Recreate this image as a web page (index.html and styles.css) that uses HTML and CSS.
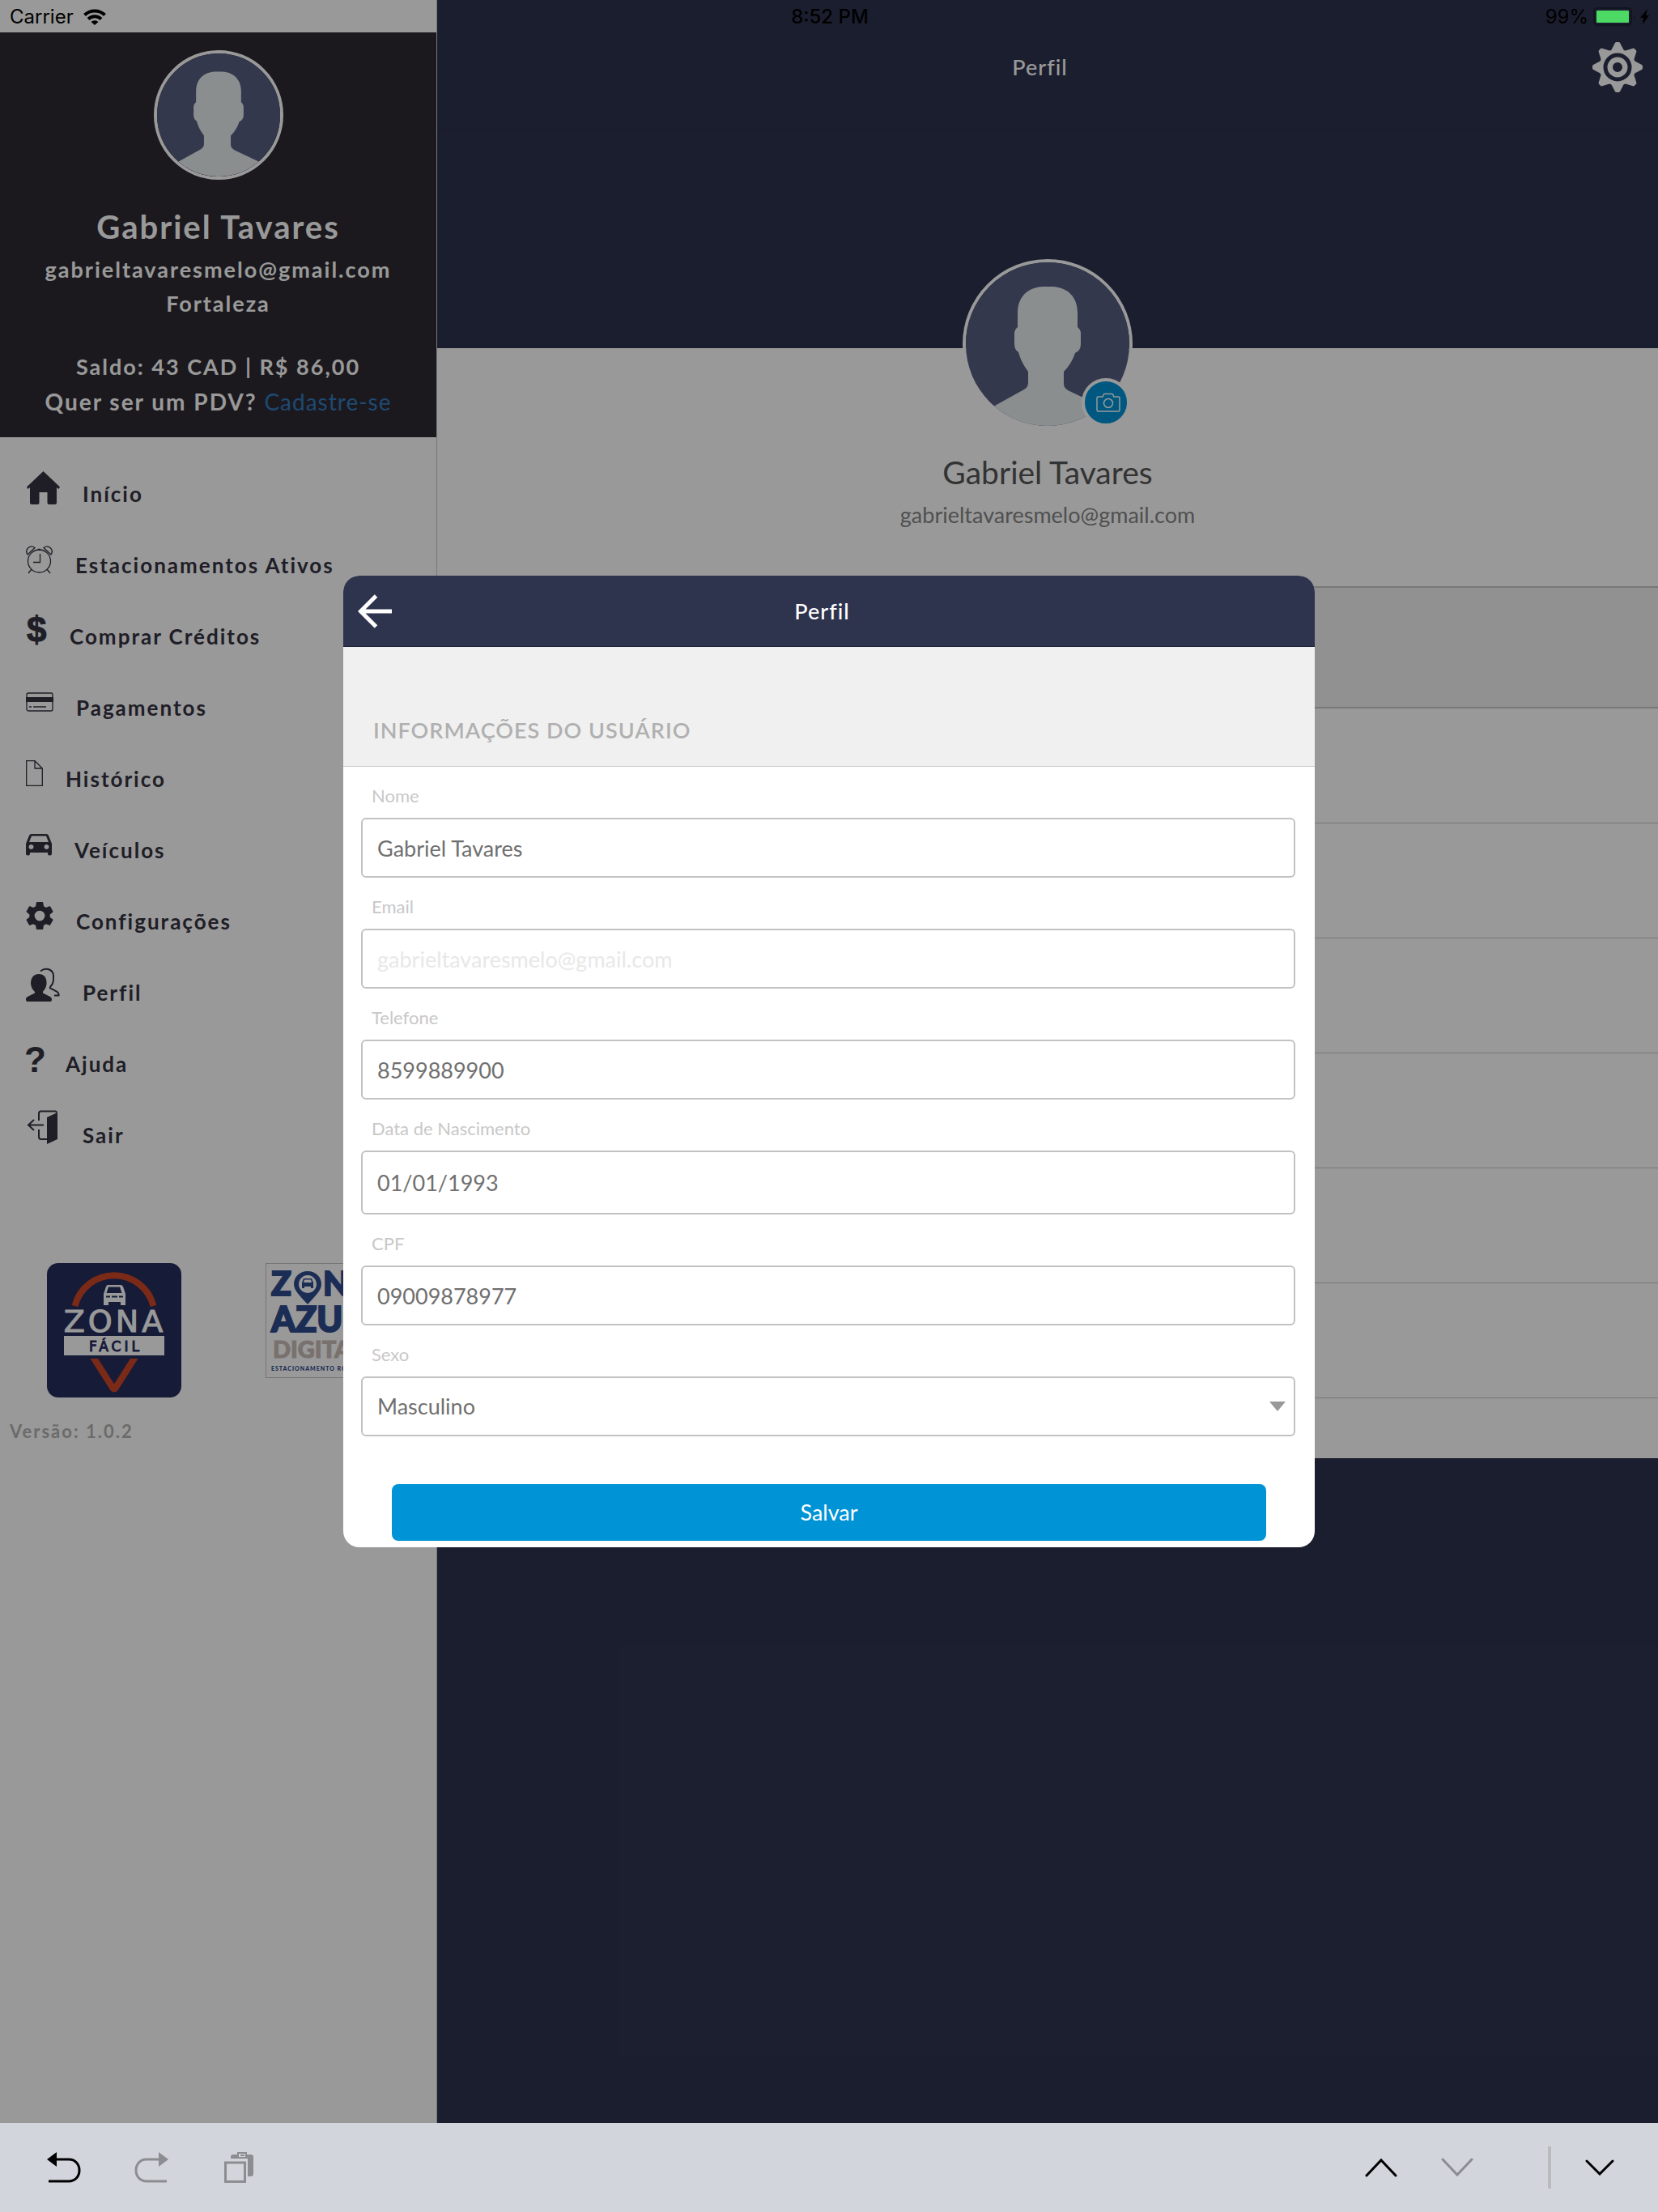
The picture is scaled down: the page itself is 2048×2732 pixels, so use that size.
FILE: index.html
```html
<!DOCTYPE html>
<html lang="pt-BR">
<head>
<meta charset="utf-8">
<meta name="viewport" content="width=device-width, initial-scale=1">
<title>Perfil</title>
<link rel="stylesheet" href="styles.css">
</head>
<body>
<svg class="defs" aria-hidden="true">
  <symbol id="person" viewBox="0 0 202 202">
    <path fill="#555e80" d="M0 0h202v202H0z"/>
    <path fill="#e6edee" d="M95 30h12c20 1 31 14 31 32v18q4 3 4 8v13q0 8-7 11-4 13-14 23v15q0 6 7 9l38 18 36 25H0l36-25 36-20q5-3 5-8v-14q-9-12-12-24-5-3-5-10V88q0-5 4-8V62c0-18 11-31 31-32z"/>
  </symbol>
</svg>

<div class="app">
  <div class="status">
    <div class="status-side">
      <span>Carrier</span>
      <svg width="28" height="20" viewBox="0 0 28 20" fill="none" stroke="#000" stroke-width="4"><path d="M1.500 7.500a18 18 0 0 1 25 0M6 12.500a11.500 11.500 0 0 1 16 0"/><path fill="#000" stroke="none" d="M9.500 16a6.500 6.500 0 0 1 9 0L14 20z"/></svg>
    </div>
    <span class="status-time">8:52 PM</span>
    <div class="status-side status-right">
      <span>99%</span>
      <svg width="70" height="24" viewBox="0 0 70 24"><rect x="1" y="1" width="46" height="21" rx="4" fill="none" stroke="#12141f" stroke-width="2"/><rect x="4" y="4" width="40" height="15" rx="1" fill="#4cd964"/><path d="M50 8q2.500 4 0 8z" fill="#12141f"/><path d="M67 2l-9 11h4l-1 8 8-11h-4z"/></svg>
    </div>
  </div>

  <aside class="sidebar">
    <div class="account">
      <svg class="avatar avatar-small" role="img" aria-label="Foto"><use href="#person"/></svg>
      <h2 class="account-name">Gabriel Tavares</h2>
      <p class="account-email">gabrieltavaresmelo@gmail.com</p>
      <p class="account-city">Fortaleza</p>
      <p class="account-balance">Saldo: 43 CAD | R$ 86,00</p>
      <p class="account-pdv">Quer ser um PDV? <a href="#cadastro">Cadastre-se</a></p>
    </div>
    <nav class="menu">
      <a href="#inicio"><svg width="42" height="46"><path d="M21.500 3 42 22.500 40.500 25 38 23v19a2 2 0 0 1-2 2h-7.500a2 2 0 0 1-2-2V29h-10v13a2 2 0 0 1-2 2H7a2 2 0 0 1-2-2V23l-2.500 2L1 22.500z"/></svg>Início</a>
      <a href="#estacionamentos"><svg width="33" height="46" class="line"><circle cx="16.500" cy="26" r="14"/><path d="M17.500 17v10.500H9M7 36l-4 5M26 36l4 5M2 18C-2 12 5 5 11 9.500zM31 18c4-6-3-13-9-8.500zM15 11.500h3"/></svg>Estacionamentos Ativos</a>
      <a href="#creditos"><svg width="26" height="46"><text class="sign heavy" x="1" y="38">$</text></svg>Comprar Créditos</a>
      <a href="#pagamentos"><svg width="34" height="46"><path d="M0 18h34v6H0z"/><g class="line"><rect x="1" y="13" width="32" height="22" rx="2"/><path d="M4 30h3M9 30h16"/></g></svg>Pagamentos</a>
      <a href="#historico"><svg width="21" height="46" class="line"><path d="M.700 8.700H11l9.300 9.300v21.300H.700zM11 8.700V18h9.300"/></svg>Histórico</a>
      <a href="#veiculos"><svg width="32" height="46"><path fill-rule="evenodd" d="M4 13q.700-2 3-2h18q2.300 0 3 2l4 10v12.500q0 2-2 2h-1q-2 0-2-2V34H5v1.500q0 2-2 2H2q-2 0-2-2V23zm3 .500L4 21h24l-3-7.500zM6.500 24a3 3 0 1 0 .010 0zM25.500 24a3 3 0 1 0 .010 0z"/></svg>Veículos</a>
      <a href="#configuracoes"><svg width="34" height="46"><path transform="translate(-4.200 2.800) scale(1.770)" d="M19.140 12.940c.040-.300.060-.610.060-.940 0-.320-.020-.640-.070-.940l2.030-1.580c.180-.140.230-.410.120-.610l-1.920-3.320c-.120-.220-.370-.290-.590-.220l-2.390.960c-.500-.380-1.030-.700-1.620-.940l-.360-2.540c-.040-.240-.240-.410-.480-.410h-3.840c-.240 0-.430.170-.470.410l-.360 2.540c-.590.240-1.130.570-1.620.940l-2.390-.960c-.220-.080-.470 0-.590.220L2.740 8.870c-.120.210-.080.470.120.610l2.030 1.580c-.050.300-.090.630-.090.940s.020.640.070.940l-2.030 1.580c-.180.140-.230.410-.120.610l1.920 3.320c.120.220.370.290.590.220l2.390-.960c.500.380 1.030.700 1.620.940l.360 2.540c.050.240.240.410.480.410h3.840c.240 0 .440-.170.470-.410l.360-2.540c.590-.240 1.130-.560 1.620-.940l2.390.960c.220.080.470 0 .590-.220l1.920-3.320c.120-.220.070-.470-.120-.610zM12 15.600a3.600 3.600 0 1 1 0-7.200 3.600 3.600 0 0 1 0 7.200z"/></svg>Configurações</a>
      <a href="#perfil"><svg width="42" height="46"><path d="M16 8c6 0 10 4 9.500 12-.500 6-3.500 8-4.500 10v1.500l9 4.500q2 1 2 3.500v.500a2 2 0 0 1-2 2H2a2 2 0 0 1-2-2v-1q0-2 2-3l9-4.500V30c-2-2-4.500-5-5-10C6 12 10 8 16 8z"/><path class="line thick" d="M18 4.500q5-4 11-2 5 2.500 5 7.500.500 8-2 11.500-3 3-2 4l8 4q3 2 2.500 5H35"/></svg>Perfil</a>
      <a href="#ajuda"><svg width="21" height="46"><text class="sign" x="-2" y="41">?</text></svg>Ajuda</a>
      <a href="#sair"><svg width="42" height="46"><path d="M26 9l13-6v33l-13 6z"/><path class="line thick" d="M16 13V4q0-2.500 2.500-2.500H36q2 0 2 2M16 24v9q0 3 2.500 3H27M22 18.500H4M10 12l-7 6.500 7 6.500"/></svg>Sair</a>
    </nav>
    <div class="logos">
      <svg width="166" height="166" viewBox="0 0 166 166" role="img" aria-label="Zona Fácil">
        <rect width="166" height="166" rx="14" fill="#252d5e"/>
        <g fill="none" stroke="#cb4626" stroke-width="8"><path d="M34.500 53a50 50 0 0 1 97 0"/><path d="M57 116l24.500 38.500q1.500 2 3 0L109 116" stroke-linejoin="round"/></g>
        <path fill="#252d5e" d="M50 110h66v8H50z"/>
        <path fill="#fff" fill-rule="evenodd" d="M75 27h16q2 0 3 2l3 9v14h-6v-4H76v4h-6V38l3-9q1-2 2-2zm1 2.500L73.500 37h19L90 29.500zM73 40.500v2h5v-2zM80 40.500v2h7v-2zM89 40.500v2h5v-2zM21 90h124v24H21z"/>
        <text class="zf-name" x="84" y="85" text-anchor="middle">ZONA</text>
        <text class="zf-sub" x="85" y="109" text-anchor="middle">FÁCIL</text>
      </svg>
      <svg width="166" height="142" viewBox="0 0 166 142" role="img" aria-label="Zona Azul Digital">
        <rect x=".500" y=".500" width="165" height="141" fill="#fff" stroke="#c4c4c4"/>
        <g class="za"><g class="za-name"><text x="7" y="40" font-size="41">Z</text><text x="71" y="40" font-size="41">NA</text><text x="7" y="85" font-size="43">AZUL</text></g><text class="za-sub" x="9" y="117" font-size="29">DIGITAL</text><text class="za-foot" x="7" y="133" font-size="7">ESTACIONAMENTO ROTATIVO</text>
        <path fill-rule="evenodd" d="M52 10c10 0 17 7 17 16 0 8-8 15-17 25-9-10-17-17-17-25 0-9 7-16 17-16zm0 5a11 11 0 1 0 .010 0z"/><path fill-rule="evenodd" d="M47 19h10l2 5v7h-3v-2h-8v2h-3v-7zm1 1.500L47 24h10l-1-3.500z"/></g>
      </svg>
    </div>
    <p class="version">Versão: 1.0.2</p>
  </aside>

  <main class="main">
    <header class="topbar">
      <h1>Perfil</h1>
      <button class="icon-button" type="button" aria-label="Configurações">
        <svg width="62" height="62" viewBox="-31 -31 62 62"><g fill="#fff" stroke="#fff" stroke-width="4" stroke-linejoin="round"><path id="tooth" d="M-6.500-19-1.300-29h2.600L6.500-19z"/><use href="#tooth" transform="rotate(45)"/><use href="#tooth" transform="rotate(90)"/><use href="#tooth" transform="rotate(135)"/><use href="#tooth" transform="rotate(180)"/><use href="#tooth" transform="rotate(225)"/><use href="#tooth" transform="rotate(270)"/><use href="#tooth" transform="rotate(315)"/></g><g fill="#2e334e" stroke="#fff"><circle r="20" stroke-width="5"/><circle r="9.250" stroke-width="6.500"/></g></svg>
      </button>
    </header>
    <section class="profile">
      <div class="photo">
        <svg class="avatar avatar-large" role="img" aria-label="Foto"><use href="#person"/></svg>
        <button class="camera" type="button" aria-label="Trocar foto">
          <svg width="30" height="26" viewBox="0 0 30 26" fill="none" stroke="#fff" stroke-width="1.500"><path d="M2.500 6H8q1-1 1-2.500.300-1 1.500-1h9q1.200 0 1.500 1Q21 5 22 6h5.500Q29 6 29 7.500v15q0 1.500-1.500 1.500h-25Q1 24 1 22.500v-15Q1 6 2.500 6z"/><circle cx="15" cy="14" r="5.500"/></svg>
        </button>
      </div>
      <h2>Gabriel Tavares</h2>
      <p>gabrieltavaresmelo@gmail.com</p>
    </section>
    <div class="band"></div>
    <div class="rows"><div></div><div></div><div></div><div></div><div></div><div></div></div>
  </main>

  <div class="overlay">
    <div class="modal" role="dialog" aria-modal="true" aria-labelledby="modal-title">
      <header class="modal-head">
        <button class="icon-button" type="button" aria-label="Voltar">
          <svg width="42" height="42" viewBox="0 0 42 42" fill="none" stroke="#fff" stroke-width="5"><path d="M42 21H5M22.500 2 3.500 21l19 19"/></svg>
        </button>
        <h2 id="modal-title">Perfil</h2>
      </header>
      <h3 class="section-title">INFORMAÇÕES DO USUÁRIO</h3>
      <form class="form">
        <label for="nome">Nome</label>
        <input id="nome" type="text" value="Gabriel Tavares">
        <label for="email">Email</label>
        <input id="email" type="email" value="gabrieltavaresmelo@gmail.com" disabled>
        <label for="telefone">Telefone</label>
        <input id="telefone" type="tel" value="8599889900">
        <label for="nascimento">Data de Nascimento</label>
        <input id="nascimento" class="tall" type="text" value="01/01/1993">
        <label for="cpf">CPF</label>
        <input id="cpf" type="text" value="09009878977">
        <label for="sexo">Sexo</label>
        <div class="select">
          <select id="sexo"><option>Masculino</option><option>Feminino</option></select>
          <svg width="20" height="12" viewBox="0 0 20 12"><path d="M0 0h20L10 12z" fill="#999"/></svg>
        </div>
        <button class="save" type="button">Salvar</button>
      </form>
    </div>
  </div>
</div>

<footer class="keybar">
  <button class="icon-button" type="button" aria-label="Desfazer"><svg width="42" height="38" viewBox="0 0 42 38"><path d="M0 9 12 0v18z"/><path fill="none" stroke="#000" stroke-width="3" d="M11 9h16c8 0 13 6 13 13.500S35 36 27 36H2"/></svg></button>
  <button class="icon-button" type="button" aria-label="Refazer"><svg width="42" height="38" viewBox="0 0 42 38"><path fill="#8b8d90" d="M42 9 30 0v18z"/><path fill="none" stroke="#8b8d90" stroke-width="3" d="M31 9H15C7 9 2 15 2 22.500S7 36 15 36h25"/></svg></button>
  <button class="icon-button" type="button" aria-label="Colar"><svg width="36" height="38" viewBox="0 0 36 38"><path fill="none" stroke="#8b8d90" stroke-width="3" d="M1.500 13h24v23.500h-24z"/><path fill="#8b8d90" fill-rule="evenodd" d="M8 8V6q0-3 3-3h5V0h12v3h5q3 0 3 3v21q0 3-3 3h-4V8zm10-6v4h8V2z"/><path fill="#8b8d90" d="M20 3h5v2h-5z"/></svg></button>
  <span class="spacer"></span>
  <button class="icon-button" type="button" aria-label="Campo anterior"><svg width="40" height="24" class="chevron"><path d="M2 22 20 3l18 19"/></svg></button>
  <button class="icon-button" type="button" aria-label="Próximo campo"><svg width="40" height="24" class="chevron off"><path d="M2 2l18 19L38 2"/></svg></button>
  <span class="divider"></span>
  <button class="icon-button" type="button" aria-label="Fechar teclado"><svg width="36" height="20" class="chevron"><path d="M2 2l16 16L34 2"/></svg></button>
</footer>
</body>
</html>
```
FILE: styles.css
```css
:root {
  --navy: #2e334e;
  --blue: #0093d6;
  --ink: #353241;
  --line: #c9c9c9;
}

* { box-sizing: border-box; }

body {
  margin: 0;
  min-height: 100vh;
  display: flex;
  flex-direction: column;
  font-family: Lato, "Open Sans", sans-serif;
  font-size: 27px;
  line-height: 32px;
}

h1, h2, h3, p { margin: 0; font-size: 27px; }
svg { display: block; flex: none; }
.defs { position: absolute; width: 0; height: 0; }
.icon-button { padding: 0; border: 0; background: none; }

.app { position: relative; flex: 1; display: flex; }

/* Status bar, drawn above the dimmed screen */
.status {
  position: absolute;
  z-index: 2;
  top: 0;
  left: 0;
  right: 0;
  display: grid;
  grid-template-columns: 1fr auto 1fr;
  padding: 0 10px 0 12px;
  font-family: Inter, sans-serif;
  font-size: 24px;
  line-height: 42px;
}
.status-side { display: flex; align-items: center; gap: 12px; }
.status-right { justify-content: flex-end; gap: 6px; }
.status-time { font-weight: 500; }

/* Sidebar */
.sidebar {
  flex: 0 0 540px;
  padding-top: 40px;
  border-right: 1px solid var(--line);
  background: #fff;
  font-weight: 700;
  letter-spacing: 2px;
}
.account {
  padding: 22px 0 28px;
  background: #2d2b32;
  color: #fff;
  text-align: center;
}
.avatar { border: 4px solid #fff; border-radius: 50%; }
.avatar-small { width: 160px; height: 160px; margin: 0 auto 34px; }
.account-name { margin-bottom: 13px; font-size: 40px; line-height: 48px; }
.account-email { margin-bottom: 10px; }
.account-city { margin-bottom: 46px; }
.account-balance { margin-bottom: 11px; }
.account-pdv { font-size: 28px; }
.account-pdv a { color: #337bbf; font-weight: 400; letter-spacing: 1px; text-decoration: none; }

.menu { padding: 18px 0 122px 32px; font-size: 26px; line-height: 30px; }
.menu a {
  display: flex;
  align-items: flex-end;
  gap: 28px;
  padding: 21px 0;
  color: var(--ink);
  text-decoration: none;
}
.menu svg { fill: var(--ink); overflow: visible; }
.menu .line { fill: none; stroke: var(--ink); stroke-width: 1.3px; }
.menu .thick { stroke-width: 2px; }
.sign { font: 700 44px "Liberation Sans", sans-serif; letter-spacing: 0; }
.heavy { stroke: var(--ink); }

.logos { display: flex; justify-content: space-between; padding: 0 45px 0 58px; }
.zf-name { font: 400 38px "DejaVu Sans", sans-serif; letter-spacing: 4px; fill: #fff; stroke: #fff; }
.zf-sub { font: 400 17px "DejaVu Sans", sans-serif; letter-spacing: 4px; fill: #252d5e; stroke: #252d5e; }
.za { fill: #2f4b8e; font-weight: 900; letter-spacing: 0; }
.za-name { stroke: #2f4b8e; stroke-width: 2px; }
.za-sub { fill: #cabdb8; stroke: #cabdb8; }
.za-foot { letter-spacing: 1px; }
.version { padding: 28px 12px 0; color: #b3b3b3; font-size: 22px; line-height: 28px; }

/* Profile screen */
.main { flex: 1; background: var(--navy); }
.topbar {
  display: grid;
  grid-template-columns: 62px 1fr 62px;
  align-items: center;
  margin-bottom: 270px;
  padding: 52px 19px 45px 0;
  border-bottom: 1px solid #2a2e46;
  color: #fff;
  text-align: center;
}
.topbar h1, .modal-head h2 { grid-column: 2; font-weight: 500; letter-spacing: 1px; }
.profile {
  display: flex;
  flex-direction: column;
  align-items: center;
  padding-bottom: 72px;
  background: #fff;
  color: #858585;
}
.photo { position: relative; margin-top: -110px; }
.avatar-large { width: 210px; height: 210px; }
.camera {
  position: absolute;
  right: 3px;
  bottom: 3px;
  width: 60px;
  height: 60px;
  display: grid;
  place-items: center;
  padding: 0 0 0 6px;
  border: 4px solid #fff;
  border-radius: 50%;
  background: var(--blue);
}
.profile h2 { margin: 30px 0 14px; color: #555; font-size: 39px; line-height: 46px; font-weight: 400; }
.band { height: 151px; border: solid var(--line); border-width: 2px 0; background: #f2f2f2; }
.rows { padding-bottom: 74px; background: #fff; }
.rows div { height: 142px; border-bottom: 1px solid var(--line); }

/* Dialog */
.overlay {
  position: absolute;
  inset: 0;
  display: flex;
  align-items: center;
  justify-content: center;
  background: rgba(0, 0, 0, .4);
}
.modal { width: 1200px; max-width: 100%; overflow: hidden; border-radius: 20px; background: #fff; }
.modal-head {
  display: grid;
  grid-template-columns: 42px 1fr 42px;
  align-items: center;
  height: 88px;
  padding: 0 35px 0 18px;
  border-bottom: 1px solid #20243a;
  background: var(--navy);
  color: #fff;
  text-align: center;
}
.section-title {
  padding: 87px 37px 28px;
  border-bottom: 1px solid var(--line);
  background: #f0f0f0;
  color: #b0b0b0;
  font-weight: 600;
  letter-spacing: 1px;
}
.form { display: flex; flex-direction: column; padding: 0 24px 8px 22px; }
.form label { padding: 23px 13px 14px; color: #c8c8c8; font-size: 22px; line-height: 26px; }
.form input, .form select {
  width: 100%;
  height: 74px;
  padding: 0 18px;
  border: 2px solid #c2c2c2;
  border-radius: 6px;
  background: #fff;
  color: #707070;
  font: inherit;
  appearance: none;
}
.form input:disabled { color: #e8e8e8; }
.form input.tall { height: 79px; }
.select { display: grid; align-items: center; }
.select > * { grid-area: 1 / 1; }
.select svg { justify-self: end; margin-right: 12px; pointer-events: none; }
.save {
  height: 70px;
  margin: 59px 36px 0 38px;
  border: 0;
  border-radius: 8px;
  background: var(--blue);
  color: #fff;
  font: inherit;
}

/* Keyboard accessory bar */
.keybar {
  display: flex;
  align-items: center;
  height: 110px;
  padding: 0 54px 0 58px;
  background: #d2d5dc;
}
.keybar > :nth-child(2) { margin-left: 66px; }
.keybar > :nth-child(3) { margin-left: 69px; }
.spacer { flex: 1; }
.keybar > :nth-child(6) { margin-left: 54px; }
.divider { width: 4px; height: 52px; margin: 0 42px 0 92px; background: #b9babc; }
.chevron { fill: none; stroke: #000; stroke-width: 3px; stroke-linecap: round; }
.chevron.off { stroke: #8b8d90; }
```
